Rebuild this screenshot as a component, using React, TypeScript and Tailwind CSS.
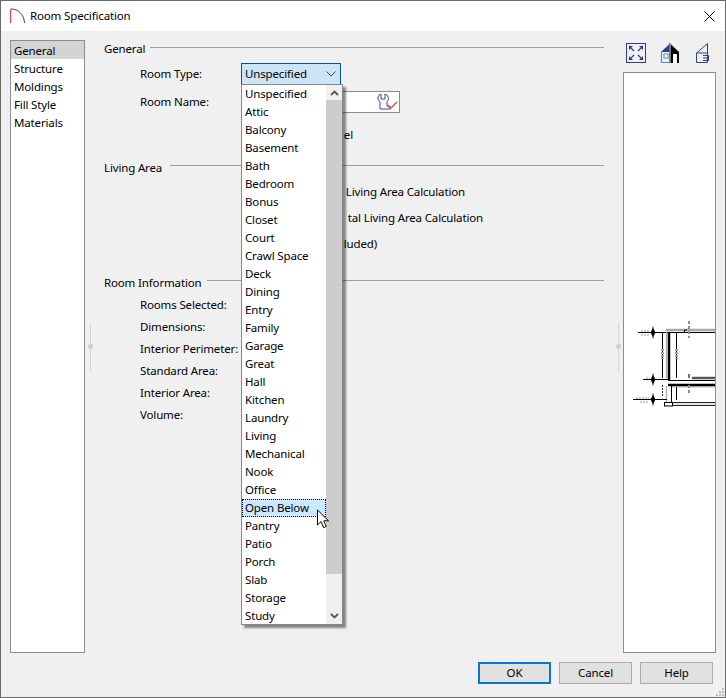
const font = "[font-family:'Noto_Sans',sans-serif]";
const ITEMS = ["Unspecified","Attic","Balcony","Basement","Bath","Bedroom","Bonus","Closet","Court","Crawl Space","Deck","Dining","Entry","Family","Garage","Great","Hall","Kitchen","Laundry","Living","Mechanical","Nook","Office","Open Below","Pantry","Patio","Porch","Slab","Storage","Study"];

function Section({ title, textClass, lineClass, children }: { title: string; textClass: string; lineClass: string; children?: React.ReactNode }) {
  return (
    <div>
      <div className="flex items-start gap-[6px] h-[18px]">
        <span className={`leading-[18px] ${textClass}`}>{title}</span>
        <div className={`flex-1 h-px bg-[#a0a0a0] ${lineClass}`} />
      </div>
      {children}
    </div>
  );
}

function Splitter({ className }: { className: string }) {
  return (
    <div className={`w-[19px] h-[613px] flex items-center ${className}`}>
      <div className="relative w-px h-[48px] bg-[#d4d4d4] flex items-center justify-center">
        <div className="absolute w-[5px] h-[5px] rounded-full bg-[#cfcfcf]" />
      </div>
    </div>
  );
}

function Info({ children }: { children: React.ReactNode }) {
  return <div className="h-[22px] leading-[22px] pl-[36px]">{children}</div>;
}

function Dropdown() {
  return (
    <div className="absolute left-0 top-[21px] w-[102px] h-[541px] bg-white border border-[#828790] shadow-[3px_3px_2px_rgba(0,0,0,0.45)] flex z-10">
      <div className="flex-1">
        {ITEMS.map((i) => (
          <div key={i} className={`h-[18px] leading-[17px] pl-[3px] ${i === "Open Below" ? "bg-[#cce8ff] outline-1 outline-dotted outline-[#000] -outline-offset-1" : ""}`}>{i}</div>
        ))}
      </div>
      <div className="w-[16px] flex flex-col bg-[#f0f0f0]">
        <div className="h-[15px] flex items-center justify-center">
          <svg width="9" height="6" viewBox="0 0 9 6"><path d="M1 5 L4.5 1.5 L8 5" fill="none" stroke="#555" strokeWidth="1.8" /></svg>
        </div>
        <div className="h-[474px] bg-[#cdcdcd]" />
        <div className="flex-1 flex items-end justify-center pb-[5px]">
          <svg width="9" height="6" viewBox="0 0 9 6"><path d="M1 1 L4.5 4.5 L8 1" fill="none" stroke="#555" strokeWidth="1.8" /></svg>
        </div>
      </div>
      <svg className="absolute left-[74px] top-[424px]" width="15" height="21" viewBox="0 0 15 21"><path d="M1.5 1 V16 L5 12.6 L7.6 18.6 L10.2 17.4 L7.8 11.8 H12.5 Z" fill="#fff" stroke="#000" strokeWidth="1" /></svg>
    </div>
  );
}

function Cross({ x, y }: { x: number; y: number }) {
  return <path d={`M${x} ${y - 4} L${x + 2} ${y} L${x} ${y + 4} L${x - 2} ${y} Z M${x} ${y - 6} V${y + 6}`} fill="#000" stroke="#000" strokeWidth="0.8" />;
}

function Preview() {
  return (
    <svg width="91" height="95" viewBox="624 315 91 95" className="shrink-0">
      <g fill="none">
        <path d="M666 330 H716" stroke="#a8a8a8" strokeWidth="2.5" />
        <path d="M638 332.5 H716" stroke="#000" />
        <path d="M666.5 330 V378 M666.5 386 V402" stroke="#b0b0b0" strokeWidth="1.4" />
        <path d="M669 332 V380" stroke="#000" strokeWidth="2.5" />
        <path d="M671.5 386 V402" stroke="#000" />
        <path d="M662.5 333 V378 M676.5 333 V378 M676.5 387 V400" stroke="#000" />
        <path d="M662.5 385 V396" stroke="#333" strokeDasharray="2 1" />
        <path d="M643 379.5 H668 M633 399.5 H667" stroke="#000" />
        <path d="M692 378 H716" stroke="#555" strokeWidth="2.5" />
        <path d="M668 380.5 H716" stroke="#000" />
        <path d="M668 385 H716" stroke="#000" strokeWidth="2.5" />
        <path d="M672 386.8 H716" stroke="#999" />
        <path d="M672 402.5 H716 M672 405.5 H716" stroke="#222" />
        <path d="M672 404 H716" stroke="#ccc" />
        <rect x="664.5" y="402.5" width="8" height="3.5" stroke="#000" />
        <path d="M684.5 333 V330 H687" stroke="#000" />
        <path d="M689 374 V378" stroke="#333" strokeWidth="1.4" />
        <path d="M689 321 V338 M689 385 V393" stroke="#8a8aa8" strokeWidth="2" strokeDasharray="3 2" />
        <path d="M662.5 349 V359 M676.5 349 V359" stroke="#a0a0b8" strokeWidth="3" strokeDasharray="2 1" />
        <path d="M641 331 H650 M641 335 H650 M646 378 H650 M636 398 H649 M640 402 H649" stroke="#999" strokeDasharray="2 1" />
      </g>
      <Cross x={653} y={332.5} />
      <Cross x={653} y={379.5} />
      <Cross x={653} y={399.5} />
    </svg>
  );
}

export default function App() {
  return (
    <div className={`w-[726px] h-[698px] flex flex-col border border-[#6a6a6a] bg-[#f0f0f0] text-[11.5px] tracking-[-0.15px] text-black overflow-hidden relative ${font}`}>
      <div className="h-[30px] bg-white flex items-center pl-[9px] shrink-0">
        <svg width="16" height="18" viewBox="0 0 16 18">
          <path d="M0.5 16 V2" stroke="#f03a4a" strokeWidth="1.2" fill="none" />
          <path d="M1 2 C8 2 14 7 14.5 16" stroke="#444" strokeWidth="1" fill="none" />
        </svg>
        <span className="ml-[4px]">Room Specification</span>
        <svg className="ml-auto mr-[10px]" width="11" height="11" viewBox="0 0 11 11"><path d="M0.5 0.5 L10.5 10.5 M10.5 0.5 L0.5 10.5" stroke="#000" strokeWidth="1" /></svg>
      </div>
      <div className="flex pl-[9px] pt-[9px]">
        <div className="w-[75px] h-[613px] bg-white border border-[#8c8c94]">
          <div className="h-[18px] leading-[20px] pl-[3px] bg-[#d4d4d4]">General</div>
          {["Structure","Moldings","Fill Style","Materials"].map((t) => (
            <div key={t} className="h-[18px] leading-[20px] pl-[3px]">{t}</div>
          ))}
        </div>
        <Splitter className="justify-start pl-[5px]" />
        <div className="w-[500px] h-[613px]">
          <Section title="General" textClass="" lineClass="mt-[7px] -ml-[1px]">
            <div className="flex items-center pt-[5px] pl-[36px]">
              <span className="w-[101px]">Room Type:</span>
              <div className="relative">
                <div className="w-[100px] h-[22px] bg-[#cce4f7] border border-[#005499] flex items-center justify-between pl-[3px] pr-[4px]">
                  <span>Unspecified</span>
                  <svg width="10" height="6" viewBox="0 0 10 6"><path d="M0.5 0.5 L5 5 L9.5 0.5" fill="none" stroke="#444" strokeWidth="1" /></svg>
                </div>
                <Dropdown />
              </div>
            </div>
            <div className="flex items-center pt-[6px] pl-[36px]">
              <span className="w-[101px]">Room Name:</span>
              <div className="w-[159px] h-[22px] bg-white border border-[#8c8c8c] flex items-center justify-end">
                <svg width="22" height="20" viewBox="0 0 22 20">
                  <path d="M4 2 V7 H8 V2 Q11.5 3 11.5 6.5 Q11.5 8.5 10 9.5 V14 H13 V17 H3 V9.5 Q0.8 8.5 0.8 6 Q0.8 3 4 2 Z" fill="none" stroke="#3b4a9b" strokeWidth="1" />
                  <path d="M10 13 L13.5 16.5 L20 10" fill="none" stroke="#d9574b" strokeWidth="1.5" />
                </svg>
              </div>
            </div>
            <div className="h-[22px] leading-[22px] mt-[11px] pl-[136px]">
              <span className="block w-[113px] text-right">el</span>
            </div>
          </Section>
          <div className="h-[11px]" />
          <Section title="Living Area" textClass="mt-[2px]" lineClass="mt-[8px] ml-[2px]">
            <div className="pl-[136px] pt-[4px]">
              <div className="h-[26px] leading-[26px] w-[225px] text-right">Living Area Calculation</div>
              <div className="h-[26px] leading-[26px] w-[243px] text-right">tal Living Area Calculation</div>
              <div className="h-[26px] leading-[26px] w-[137px] text-right">luded)</div>
            </div>
          </Section>
          <div className="h-[18px]" />
          <Section title="Room Information" textClass="-mt-[1px]" lineClass="mt-[5px]">
            <div className="pt-[1px]">
              <Info>Rooms Selected:</Info>
              <Info>Dimensions:</Info>
              <Info>Interior Perimeter:</Info>
              <Info>Standard Area:</Info>
              <Info>Interior Area:</Info>
              <Info>Volume:</Info>
            </div>
          </Section>
        </div>
        <Splitter className="justify-end pr-[4px]" />
        <div className="w-[93px] h-[613px] flex flex-col">
          <div className="h-[32px] flex items-start pl-[3px] pt-[3px]">
            <svg width="20" height="20" viewBox="0 0 20 20">
              <rect x="0.5" y="0.5" width="19" height="19" fill="none" stroke="#2c3e8c" />
              <path d="M3 3 L7 3 L3 7 Z M17 3 L13 3 L17 7 Z M3 17 L7 17 L3 13 Z M17 17 L13 17 L17 13 Z" fill="#2c3e8c" />
              <path d="M3 3 L8 8 M17 3 L12 8 M3 17 L8 12 M17 17 L12 12" stroke="#2c3e8c" strokeWidth="1.2" />
            </svg>
            <svg className="ml-[14px]" width="20" height="20" viewBox="0 0 20 20">
              <path d="M9.5 1 L1 9 H9.5 Z" fill="#2c3e8c" />
              <path d="M10.5 1 L19 9 V20 H10.5 Z" fill="#000" />
              <rect x="13" y="11" width="4" height="9" fill="#fff" />
              <path d="M1.5 9 V19.5 H9.5" fill="none" stroke="#3a9bc5" strokeWidth="1.2" />
              <rect x="4" y="11" width="4" height="4" fill="#fff" stroke="#3a9bc5" />
              <rect x="9" y="0" width="1.5" height="20" fill="#777" />
            </svg>
            <svg className="ml-[16px]" width="13" height="20" viewBox="0 0 13 20">
              <path d="M0.5 10 L11.5 0.5 V19.5 H0.5 Z M0.5 10 H11.5" fill="none" stroke="#2c3e8c" />
              <path d="M7 12.5 H12.5 V17.5 H7 M7 15 H12.5" fill="none" stroke="#2c3e8c" />
            </svg>
          </div>
          <div className="flex-1 bg-white border border-[#8c8c94] flex items-center overflow-hidden">
            <Preview />
          </div>
        </div>
      </div>
      <div className="flex justify-end gap-[8px] pr-[12px] pt-[9px]">
        <button className="w-[73px] h-[22px] bg-[#e1e1e1] border-2 border-[#0078d7]">OK</button>
        <button className="w-[73px] h-[22px] bg-[#e1e1e1] border border-[#adadad]">Cancel</button>
        <button className="w-[73px] h-[22px] bg-[#e1e1e1] border border-[#adadad]">Help</button>
      </div>
      <svg className="absolute right-0 bottom-0" width="10" height="10" viewBox="0 0 10 10" fill="#bcbcbc">
        <rect x="7" y="1" width="2" height="2" /><rect x="4" y="4" width="2" height="2" /><rect x="7" y="4" width="2" height="2" /><rect x="1" y="7" width="2" height="2" /><rect x="4" y="7" width="2" height="2" /><rect x="7" y="7" width="2" height="2" />
      </svg>
    </div>
  );
}
